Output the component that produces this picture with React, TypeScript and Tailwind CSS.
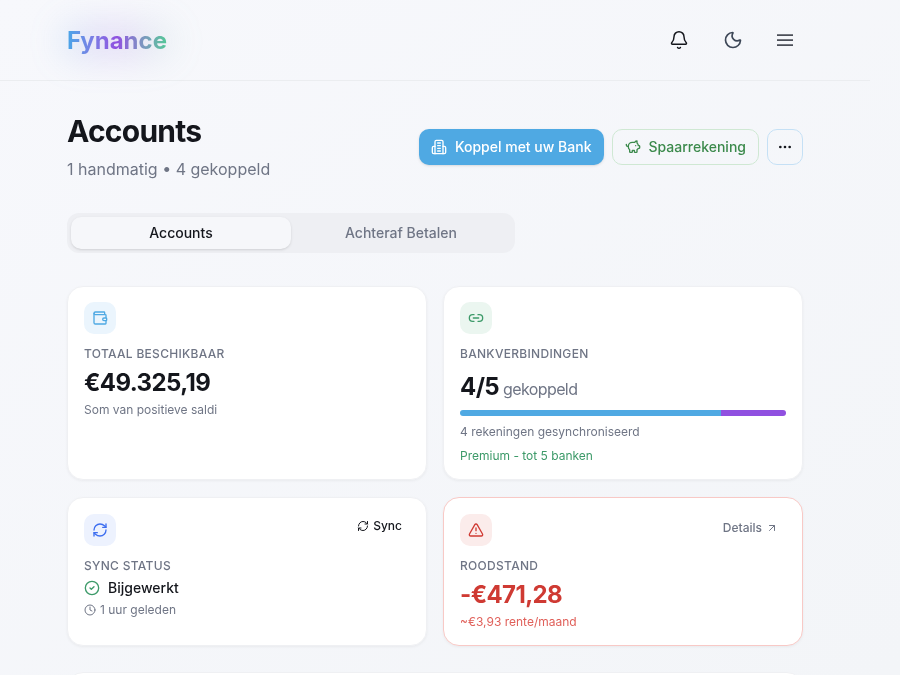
import { Bell, Moon, PiggyBank, Ellipsis, Wallet, Link2, RefreshCw, TriangleAlert, CircleCheck, Clock, ArrowUpRight } from "lucide-react";

function BankIcon() {
  return (
    <svg width="16" height="16" viewBox="0 0 24 24" fill="none" stroke="currentColor" strokeWidth="2" strokeLinecap="round" strokeLinejoin="round">
      <path d="M6 22V4a2 2 0 0 1 2-2h8a2 2 0 0 1 2 2v18" />
      <path d="M6 11H4a2 2 0 0 0-2 2v7a2 2 0 0 0 2 2h16a2 2 0 0 0 2-2v-7a2 2 0 0 0-2-2h-2" />
      <path d="M10 6h4M10 10h4M10 14h4M10 18h4" />
    </svg>
  );
}

function MenuIcon() {
  return (
    <svg width="24" height="24" viewBox="0 0 24 24" fill="none" stroke="currentColor" strokeWidth="1.75">
      <path d="M4 7h16M4 12h16M4 17h16" />
    </svg>
  );
}

export default function App() {
  return (
    <div className="h-[675px] w-[900px] overflow-hidden bg-gradient-to-br from-[#f7f8fc] to-[#f3f5f8] font-['Inter',sans-serif] text-[#14161c] antialiased">
      <div className="w-[870px] will-change-transform">
        <header className="flex h-[81px] items-center justify-between border-b border-[#ebedf0] pl-[67px] pr-[73px]">
          <div className="relative mt-[1px]">
            <div className="absolute -inset-x-2 -inset-y-1 rounded-full bg-gradient-to-r from-[#4fa9e3]/15 via-[#9050e0]/15 to-[#56c596]/10 blur-lg" />
            <span className="relative bg-gradient-to-r from-[#45a5e8] via-[#9050e0] to-[#50c896] bg-clip-text text-2xl font-bold text-transparent">Fynance</span>
          </div>
          <div className="flex items-center gap-[28px]">
            <div className="mr-[2px] flex h-6 w-6 items-center justify-center"><Bell size={20} className="text-[#14161c]" strokeWidth={1.75} /></div>
            <div className="flex h-6 w-6 items-center justify-center"><Moon size={20} className="text-[#3d4757]" strokeWidth={2} /></div>
            <div className="text-[#4b4f58]"><MenuIcon /></div>
          </div>
        </header>
        <main className="px-[67px] pt-[32px]">
          <div className="flex items-start justify-between">
            <div>
              <h1 className="text-[30px] leading-[36px] font-bold tracking-tight">Accounts</h1>
              <p className="mt-[8px] text-base text-[#6f7585]">1 handmatig • 4 gekoppeld</p>
            </div>
            <div className="mt-[16px] flex items-center gap-2">
              <button className="flex h-9 items-center gap-2 rounded-[10px] bg-[#4fa9e3] px-3 text-sm font-medium text-white shadow-sm"><BankIcon />Koppel met uw Bank</button>
              <button className="flex h-9 items-center gap-2 rounded-[10px] border border-[#cfe8d3] px-3 text-sm font-medium text-[#3c8a4c]"><PiggyBank size={16} />Spaarrekening</button>
              <button className="flex h-9 w-9 items-center justify-center rounded-[10px] border border-[#c5e0f5] text-[#14161c]"><Ellipsis size={16} /></button>
            </div>
          </div>
          <div className="mt-[32px] flex h-10 w-[448px] rounded-xl bg-[#eeeff3] p-1">
            <div className="flex flex-1 items-center justify-center rounded-[10px] bg-[#f6f7fa] text-sm font-medium shadow-sm">Accounts</div>
            <div className="flex flex-1 items-center justify-center text-sm font-medium text-[#6f7585]">Achteraf Betalen</div>
          </div>
          <div className="mt-[33px] grid grid-cols-2 gap-x-4 gap-y-[17px]">
            <section className="h-[194px] rounded-2xl border border-[#eff0f3] bg-white p-4 shadow-[0_1px_3px_rgba(0,0,0,0.05)]">
              <div className="-mt-px flex h-8 w-8 items-center justify-center rounded-[10px] bg-[#ebf5fd] text-[#4fa9e3]"><Wallet size={16} /></div>
              <p className="mt-3 text-xs font-medium tracking-wide text-[#6f7585]">TOTAAL BESCHIKBAAR</p>
              <p className="mt-[5px] text-2xl font-bold tracking-tight">€49.325,19</p>
              <p className="mt-[3px] text-xs text-[#6f7585]">Som van positieve saldi</p>
            </section>
            <section className="h-[194px] rounded-2xl border border-[#eff0f3] bg-white p-4 shadow-[0_1px_3px_rgba(0,0,0,0.05)]">
              <div className="-mt-px flex h-8 w-8 items-center justify-center rounded-[10px] bg-[#ebf6f0] text-[#3d9a69]"><Link2 size={16} /></div>
              <p className="mt-3 text-xs font-medium tracking-wide text-[#6f7585]">BANKVERBINDINGEN</p>
              <p className="mt-[9px] text-2xl font-bold tracking-tight">4/5<span className="text-base font-normal text-[#6f7585]"> gekoppeld</span></p>
              <div className="mt-[7px] flex h-1.5 overflow-hidden rounded-full">
                <div className="w-4/5 bg-[#4fa9e3]" />
                <div className="w-1/5 bg-[#9050e0]" />
              </div>
              <p className="mt-[8px] text-xs text-[#6f7585]">4 rekeningen gesynchroniseerd</p>
              <p className="mt-[8px] text-xs text-[#3d9a69]">Premium - tot 5 banken</p>
            </section>
            <section className="h-[149px] rounded-2xl border border-[#eff0f3] bg-white p-4 shadow-[0_1px_3px_rgba(0,0,0,0.05)]">
              <div className="flex items-start justify-between">
                <div className="flex h-8 w-8 items-center justify-center rounded-[10px] bg-[#edf2fe] text-[#3d6ef0]"><RefreshCw size={16} /></div>
                <div className="mr-2 mt-[4px] flex items-center gap-1 text-xs font-medium"><RefreshCw size={12} />Sync</div>
              </div>
              <p className="mt-3 text-xs font-medium tracking-wide text-[#6f7585]">SYNC STATUS</p>
              <div className="mt-1 flex items-center gap-2 text-sm font-medium"><CircleCheck size={16} className="text-[#3d9a69]" />Bijgewerkt</div>
              <div className="mt-1 flex items-center gap-1 text-xs text-[#6f7585]"><Clock size={12} />1 uur geleden</div>
            </section>
            <section className="h-[149px] rounded-2xl border border-[#f8c9c6] bg-white p-4 shadow-[0_1px_3px_rgba(0,0,0,0.05)]">
              <div className="flex items-start justify-between">
                <div className="flex h-8 w-8 items-center justify-center rounded-[10px] bg-[#fbeceb] text-[#d03a33]"><TriangleAlert size={16} /></div>
                <div className="mr-2 mt-[6px] flex items-center gap-1 text-xs font-medium text-[#6f7585]">Details <ArrowUpRight size={12} /></div>
              </div>
              <p className="mt-3 text-xs font-medium tracking-wide text-[#6f7585]">ROODSTAND</p>
              <p className="mt-[5px] text-2xl font-bold tracking-tight text-[#cf3a33]">-€471,28</p>
              <p className="mt-[3px] text-xs text-[#e0605a]">~€3,93 rente/maand</p>
            </section>
          </div>
          <div className="mt-[26px] h-16 rounded-2xl border border-[#eff0f3] bg-white" />
        </main>
      </div>
    </div>
  );
}
